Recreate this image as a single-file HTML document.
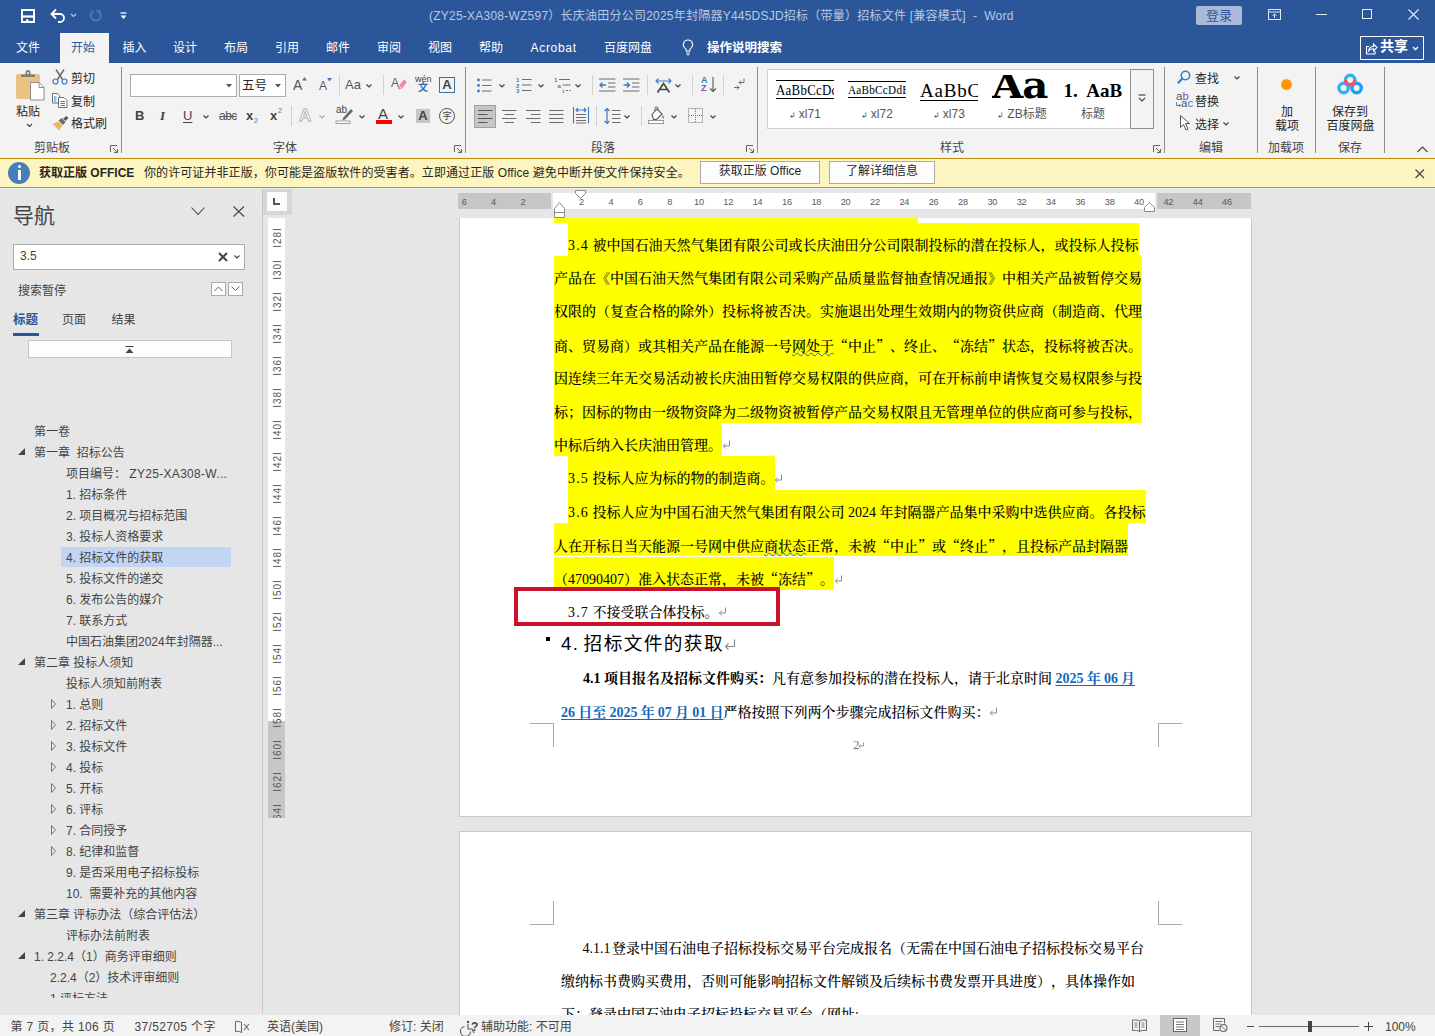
<!DOCTYPE html>
<html lang="zh-CN"><head><meta charset="utf-8"><title>Word</title>
<style>
html,body{margin:0;padding:0}
body{width:1435px;height:1036px;overflow:hidden;position:relative;background:#e6e6e6;font-family:"Liberation Sans","Noto Sans CJK SC",sans-serif;font-size:12px;color:#262626;line-height:1;text-spacing-trim:space-all;text-autospace:no-autospace}
.a{position:absolute;white-space:nowrap}
svg{position:absolute;overflow:visible}
/* title + tabs */
#title{left:0;top:0;width:1435px;height:63px;background:#2b579a}
#ttext{left:429px;top:10px;font-size:12px;color:#b9c8e0;white-space:pre;letter-spacing:0.23px}
.tab{top:41.6px;font-size:12px;color:#fff}
#tabact{left:60px;top:33px;width:49px;height:30px;background:#f3f3f3}
/* ribbon */
#ribbon{left:0;top:63px;width:1435px;height:95px;background:#f3f3f3}
.sep{width:1px;background:#8f8f8f;top:69px;height:84px}
.sep2{width:1px;background:#d0d0d0;height:20px}
.glab{top:141.5px;font-size:12px;color:#444}
.rt{font-size:12px;color:#262626;margin-top:1px}
/* notice */
#notice{left:0;top:158px;width:1435px;height:30px;background:#fdf5c0;border-top:1px solid #bc8d0f;border-bottom:1px solid #bc8d0f;box-sizing:border-box}
.nbtn{top:161px;height:23px;box-sizing:border-box;border:1px solid #ababab;background:#fdfdfd;font-size:12px;line-height:19.5px;text-align:center;color:#262626}
/* nav */
#nav{left:0;top:188px;width:262px;height:825px;background:#e6e6e6;border-right:1px solid #c6c6c6}
.nv{font-size:12px;color:#444;height:21px;line-height:21px;white-space:pre}
/* doc */
.page{background:#fff;border:1px solid #c8c8c8;box-sizing:border-box}
.d{font-family:"Liberation Serif","Noto Serif CJK SC",serif;font-weight:500;font-size:14px;color:#000;height:33.33px;line-height:33.33px}
.q{font-family:"Noto Serif CJK SC",serif;font-feature-settings:"fwid"}
.n{letter-spacing:1.17px}
.g{display:inline-block;width:3.5px}
.bl{font-weight:bold;color:#1268c0;text-decoration:underline;text-underline-offset:2px;word-spacing:-0.3px}
.pm{font-family:"DejaVu Sans",sans-serif;font-size:11px;color:#8a8a8a;margin-left:2px}
.pmi{position:static;display:inline-block;vertical-align:0.5px;margin-left:-0.5px}
.hl{background:#ffff00}
.wv{text-decoration:underline wavy #2a62d8 1px;text-underline-offset:1px}
.rn{font-size:9.2px;color:#595959;width:20px;text-align:center;top:196.5px;height:10px;line-height:10px;letter-spacing:-0.2px}
.vn{font-size:10px;letter-spacing:1px;color:#595959;width:32px;height:17px;line-height:17px;text-align:center;left:260.5px;transform:rotate(-90deg)}
/* status */
#status{left:0;top:1015px;width:1435px;height:21px;background:#f3f3f3}
.st{top:1021px;font-size:12px;color:#444}
.stw{letter-spacing:0.35px}
</style></head><body>
<div class="a" id="title"></div>
<!-- quick access -->
<svg style="left:21px;top:9px" width="14" height="14" viewBox="0 0 14 14"><rect x="1" y="1" width="12" height="12" fill="none" stroke="#fff" stroke-width="2"/><rect x="1" y="6.400" width="12" height="2.200" fill="#fff"/><rect x="5" y="10.500" width="2.500" height="3" fill="#fff"/></svg>
<svg style="left:50px;top:8px" width="16" height="16" viewBox="0 0 16 16"><path d="M2 6h8a4 4 0 0 1 0 8H8" fill="none" stroke="#fff" stroke-width="1.8"/><path d="M6 1.5L1.5 6 6 10.5" fill="none" stroke="#fff" stroke-width="1.8"/></svg>
<svg style="left:70px;top:13px" width="8" height="5"><path d="M1 1l2.5 2.5L6 1" fill="none" stroke="#b9c8e0" stroke-width="1.2"/></svg>
<svg style="left:89px;top:8px" width="14" height="14" viewBox="0 0 14 14"><path d="M4.500 3.200a5 5 0 1 0 6.200 1.300" fill="none" stroke="#4a79b6" stroke-width="1.900"/><path d="M7 2.200h4.300v4.300z" fill="#4a79b6" stroke="#4a79b6" stroke-width="0.600"/></svg>
<svg style="left:120px;top:12px" width="8" height="8"><path d="M0.5 1h6" stroke="#fff" stroke-width="1.3"/><path d="M0.5 3.5h6L3.5 7z" fill="#fff"/></svg>
<div class="a" id="ttext">(ZY25-XA308-WZ597）长庆油田分公司2025年封隔器Y445DSJD招标（带量）招标文件 [兼容模式]  -  Word</div>
<div class="a" style="left:1196px;top:6px;width:46px;height:19px;background:#a9bbd9;border-radius:2px;color:#2b579a;font-size:13px;line-height:19px;text-align:center">登录</div>
<svg style="left:1268px;top:9px" width="13" height="11"><rect x="0.5" y="0.5" width="12" height="10" fill="none" stroke="#dfe6f1"/><path d="M0.5 3h12M6.5 9V5M4.5 6.8l2-2 2 2" fill="none" stroke="#dfe6f1"/></svg>
<div class="a" style="left:1316px;top:14px;width:11px;height:1px;background:#e6ecf5"></div>
<div class="a" style="left:1362px;top:9px;width:10px;height:10px;box-sizing:border-box;border:1px solid #e6ecf5"></div>
<svg style="left:1408px;top:9px" width="11" height="11"><path d="M0.5 0.5l10 10M10.5 0.5l-10 10" stroke="#e6ecf5" stroke-width="1.1"/></svg>
<!-- tabs -->
<div class="a" id="tabact"></div>
<div class="a tab" style="left:16px">文件</div>
<div class="a tab" style="left:71px;color:#2b579a">开始</div>
<div class="a tab" style="left:122.5px">插入</div>
<div class="a tab" style="left:173px">设计</div>
<div class="a tab" style="left:224px">布局</div>
<div class="a tab" style="left:275px">引用</div>
<div class="a tab" style="left:326px">邮件</div>
<div class="a tab" style="left:377px">审阅</div>
<div class="a tab" style="left:428px">视图</div>
<div class="a tab" style="left:479px">帮助</div>
<div class="a tab" style="left:530.5px;letter-spacing:0.7px">Acrobat</div>
<div class="a tab" style="left:604px">百度网盘</div>
<svg style="left:682px;top:39px" width="12" height="17" viewBox="0 0 12 17"><path d="M6 1a4.6 4.6 0 0 0-2.6 8.4c.5.5.8 1 .8 1.8v.8h3.600v-.8c0-.8.3-1.300.8-1.800A4.600 4.600 0 0 0 6 1z M4.2 14h3.600 M4.700 15.800h2.600" fill="none" stroke="#fff" stroke-width="1.1"/></svg>
<div class="a tab" style="left:707px;font-weight:bold;font-size:12.500px">操作说明搜索</div>
<div class="a" style="left:1360px;top:36px;width:64px;height:24px;box-sizing:border-box;border:1px solid #fff"></div>
<svg style="left:1365px;top:42px" width="13" height="13" viewBox="0 0 13 13"><path d="M4 4.500H1.500v7.500h8.500V9" fill="none" stroke="#fff" stroke-width="1.1"/><path d="M3.500 9c.5-3 2.500-4.500 5-4.500V2l3.500 3.500L8.500 9V6.800C6.500 6.800 4.800 7.500 3.500 9z" fill="none" stroke="#fff" stroke-width="1.1"/></svg>
<div class="a" style="left:1380px;top:39px;font-size:14px;font-weight:bold;color:#fff">共享</div>
<svg style="left:1412px;top:46px" width="8" height="5"><path d="M1 1l2.500 2.500L6 1" fill="none" stroke="#fff" stroke-width="1.3"/></svg>
<div class="a" id="ribbon"></div>
<!-- clipboard group -->
<svg style="left:16px;top:70px" width="30" height="32" viewBox="0 0 30 32"><rect x="0" y="4" width="24" height="25" rx="2" fill="#eac282"/><path d="M5 7V4.500h4.500V2.500a2.500 2.500 0 0 1 5 0V4.500H19V7z" fill="#7f7f7f"/><circle cx="12" cy="3" r="1" fill="#f3f3f3"/><path d="M14.500 12.500h8.500l5 5v12.500H14.500z" fill="#fff" stroke="#8c8c8c"/><path d="M23 12.500v5h5" fill="none" stroke="#8c8c8c"/></svg>
<div class="a rt" style="left:16px;top:104.5px">粘贴</div>
<svg style="left:26px;top:123px" width="8" height="5"><path d="M1 1l2.500 2.500L6 1" fill="none" stroke="#444" stroke-width="1.2"/></svg>
<svg style="left:52px;top:69px" width="16" height="16" viewBox="0 0 16 16"><path d="M4 0.500l6.500 10M12 0.500L5.500 10.500" stroke="#6d6d6d" stroke-width="1.500" fill="none"/><circle cx="3.500" cy="12.500" r="2.500" fill="none" stroke="#3b7bc4" stroke-width="1.200"/><circle cx="12.500" cy="12.500" r="2.500" fill="none" stroke="#3b7bc4" stroke-width="1.200"/></svg>
<div class="a rt" style="left:71px;top:72px">剪切</div>
<svg style="left:52px;top:93px" width="16" height="15" viewBox="0 0 16 15"><path d="M0.500 0.500h5l2 2v7.500h-7z" fill="#fff" stroke="#6d6d6d"/><path d="M6.500 4.500h5.500l3 3v7h-8.500z" fill="#fff" stroke="#6d6d6d"/><path d="M2 4h2.500M2 6h2.500M2 8h2.500M8.500 8.500h4.500M8.500 10.500h4.500M8.500 12.500h4.500" stroke="#3b7bc4" fill="none"/></svg>
<div class="a rt" style="left:71px;top:94.5px">复制</div>
<svg style="left:52px;top:116px" width="17" height="15" viewBox="0 0 17 15"><path d="M0.500 8l6-2.500 4 4-3.500 5z" fill="#eab765"/><path d="M6.500 4.500l3-2.500 4 4-2.500 3z" fill="#6d6d6d"/><path d="M11 2.500l3.500-2.500 2 2-3 3z" fill="#595959"/></svg>
<div class="a rt" style="left:71px;top:117px">格式刷</div>
<div class="a glab" style="left:34px">剪贴板</div>
<svg class="ln" style="left:110px;top:145px" width="8" height="8"><path d="M0.500 7V0.500H7M3 3l4.500 4.500M7.500 4v3.500H4" fill="none" stroke="#666"/></svg>
<div class="a sep" style="left:121px;top:67px;height:86px"></div>
<!-- font group row1 -->
<div class="a" style="left:130px;top:74px;width:107px;height:23px;box-sizing:border-box;border:1px solid #ababab;background:#fff"></div>
<svg style="left:226px;top:84px" width="6" height="4"><path d="M0 0h6L3 3.500z" fill="#555"/></svg>
<div class="a" style="left:239px;top:74px;width:47px;height:23px;box-sizing:border-box;border:1px solid #ababab;background:#fff"></div>
<div class="a rt" style="left:242px;top:79px;font-size:12.500px">五号</div>
<svg style="left:275px;top:84px" width="6" height="4"><path d="M0 0h6L3 3.500z" fill="#555"/></svg>
<div class="a" style="left:293px;top:78px;font-size:14px;color:#555">A</div>
<svg style="left:302px;top:77px" width="5" height="4"><path d="M0 3.500h5L2.500 0z" fill="#3b7bc4"/></svg>
<div class="a" style="left:319px;top:80px;font-size:12px;color:#555">A</div>
<svg style="left:327px;top:78px" width="5" height="4"><path d="M0 0h5L2.500 3.500z" fill="#3b7bc4"/></svg>
<div class="a sep2" style="left:339px;top:75px"></div>
<div class="a" style="left:345px;top:78px;font-size:13px;color:#555">Aa</div>
<svg style="left:366px;top:84px" width="7" height="5"><path d="M0.500 0.500l2.500 2.500 2.500-2.500" fill="none" stroke="#444" stroke-width="1.200"/></svg>
<div class="a sep2" style="left:383px;top:75px"></div>
<div class="a" style="left:391px;top:77px;font-size:12px;color:#666">A</div>
<svg style="left:393px;top:79px" width="14" height="13"><path d="M6 6.500l5-6 3 2.500-5 6.500-3 1-1.500-1.500z" fill="#ee8a9c"/><path d="M6 6.500l3 3" stroke="#fff" stroke-width="0.800"/></svg>
<div class="a" style="left:415px;top:75px;font-size:9px;color:#444">wén</div>
<div class="a" style="left:418px;top:83px;font-size:10px;color:#2e6fbd;font-weight:bold">文</div>
<div class="a" style="left:439px;top:77px;width:16px;height:16px;box-sizing:border-box;border:1px solid #41719c;color:#444;font-size:13px;line-height:14px;text-align:center;font-weight:bold">A</div>
<!-- font group row2 -->
<div class="a" style="left:135px;top:109px;font-size:13px;font-weight:bold;color:#444">B</div>
<div class="a" style="left:160px;top:109px;font-size:13px;font-style:italic;font-family:'Liberation Serif',serif;font-weight:bold;color:#444">I</div>
<div class="a" style="left:183px;top:109px;font-size:13px;color:#444;text-decoration:underline;text-underline-offset:2px">U</div>
<svg style="left:203px;top:115px" width="7" height="5"><path d="M0.500 0.500l2.500 2.500 2.500-2.500" fill="none" stroke="#444" stroke-width="1.200"/></svg>
<div class="a" style="left:219px;top:110px;font-size:12px;color:#555;text-decoration:line-through;letter-spacing:-0.500px">abc</div>
<div class="a" style="left:246px;top:109px;font-size:13px;font-weight:bold;color:#444">x</div><div class="a" style="left:254px;top:117px;font-size:7px;color:#3b7bc4">2</div>
<div class="a" style="left:270px;top:109px;font-size:13px;font-weight:bold;color:#444">x</div><div class="a" style="left:278px;top:107px;font-size:7px;color:#3b7bc4">2</div>
<div class="a sep2" style="left:291px;top:106px"></div>
<div class="a" style="left:299px;top:107px;font-size:17px;color:#f7f7f7;-webkit-text-stroke:0.8px #b0b0b0;font-weight:bold">A</div>
<svg style="left:319px;top:115px" width="7" height="5"><path d="M0.500 0.500l2.500 2.500 2.500-2.500" fill="none" stroke="#aaa" stroke-width="1.200"/></svg>
<div class="a" style="left:336px;top:105px;font-size:10px;color:#444">ab</div>
<svg style="left:336px;top:107px" width="18" height="17"><path d="M7 11l8-9 2 2-8 8.500-2.500.500z" fill="#666"/><rect x="0" y="14" width="14" height="2.500" fill="#fff" stroke="#888" stroke-width="0.800"/></svg>
<svg style="left:359px;top:115px" width="7" height="5"><path d="M0.500 0.500l2.500 2.500 2.500-2.500" fill="none" stroke="#444" stroke-width="1.200"/></svg>
<div class="a" style="left:378px;top:106px;font-size:15px;color:#444">A</div>
<div class="a" style="left:376px;top:120px;width:16px;height:4px;background:#f00"></div>
<svg style="left:398px;top:115px" width="7" height="5"><path d="M0.500 0.500l2.500 2.500 2.500-2.500" fill="none" stroke="#444" stroke-width="1.200"/></svg>
<div class="a" style="left:416px;top:109px;width:14px;height:14px;background:#c6c6c6;color:#444;font-size:13px;line-height:14px;text-align:center;font-weight:bold">A</div>
<div class="a" style="left:439px;top:108px;width:16px;height:16px;box-sizing:border-box;border:1px solid #555;border-radius:8px;color:#444;font-size:9px;line-height:14px;text-align:center">字</div>
<div class="a glab" style="left:273px">字体</div>
<svg style="left:454px;top:145px" width="8" height="8"><path d="M0.500 7V0.500H7M3 3l4.500 4.500M7.500 4v3.500H4" fill="none" stroke="#666"/></svg>
<div class="a sep" style="left:465px;top:67px;height:86px"></div>
<!-- paragraph row1 -->
<svg style="left:477px;top:78px" width="15" height="15"><circle cx="1.500" cy="2" r="1.400" fill="#3b7bc4"/><circle cx="1.500" cy="7.500" r="1.400" fill="#3b7bc4"/><circle cx="1.500" cy="13" r="1.400" fill="#3b7bc4"/><path d="M5 2h9.500M5 7.500h9.500M5 13h9.500" stroke="#6d6d6d" stroke-width="1.100"/></svg>
<svg style="left:499px;top:84px" width="7" height="5"><path d="M0.500 0.500l2.500 2.500 2.500-2.500" fill="none" stroke="#444" stroke-width="1.200"/></svg>
<svg style="left:516px;top:77px" width="16" height="16"><path d="M6 2.500h9.500M6 8h9.500M6 13.500h9.500" stroke="#6d6d6d" stroke-width="1.100"/><text x="0" y="5" font-size="6" font-weight="bold" fill="#3b7bc4" font-family="Liberation Sans, sans-serif">1</text><text x="0" y="10.500" font-size="6" font-weight="bold" fill="#3b7bc4" font-family="Liberation Sans, sans-serif">2</text><text x="0" y="16" font-size="6" font-weight="bold" fill="#3b7bc4" font-family="Liberation Sans, sans-serif">3</text></svg>
<svg style="left:538px;top:84px" width="7" height="5"><path d="M0.500 0.500l2.500 2.500 2.500-2.500" fill="none" stroke="#444" stroke-width="1.200"/></svg>
<svg style="left:554px;top:77px" width="18" height="16"><path d="M5 2.500h11M8.500 8h8M12 13.500h2M15 13.500h1.500" stroke="#6d6d6d" stroke-width="1.100"/><text x="0" y="5" font-size="6" font-weight="bold" fill="#3b7bc4" font-family="Liberation Sans, sans-serif">1</text><text x="3.500" y="10.500" font-size="6" font-weight="bold" fill="#3b7bc4" font-family="Liberation Sans, sans-serif">a</text><text x="8.500" y="16" font-size="6" font-weight="bold" fill="#3b7bc4" font-family="Liberation Sans, sans-serif">i</text></svg>
<svg style="left:575px;top:84px" width="7" height="5"><path d="M0.500 0.500l2.500 2.500 2.500-2.500" fill="none" stroke="#444" stroke-width="1.200"/></svg>
<div class="a sep2" style="left:592px;top:75px"></div>
<svg style="left:599px;top:78px" width="17" height="14"><path d="M0 1h16.500M9 5h7.500M9 9h7.500M0 13h16.500" stroke="#6d6d6d" stroke-width="1.100"/><path d="M7 7H1M3.500 4.500L1 7l2.500 2.500" fill="none" stroke="#3b7bc4" stroke-width="1.300"/></svg>
<svg style="left:623px;top:78px" width="17" height="14"><path d="M0 1h16.500M9 5h7.500M9 9h7.500M0 13h16.500" stroke="#6d6d6d" stroke-width="1.100"/><path d="M0.500 7h6M4 4.500L6.500 7 4 9.500" fill="none" stroke="#3b7bc4" stroke-width="1.300"/></svg>
<div class="a sep2" style="left:647px;top:75px"></div>
<svg style="left:655px;top:78px" width="17" height="15"><path d="M1 3h15M3.500 0.500L1 3l2.500 2.500M13.500 0.500L16 3l-2.500 2.500" fill="none" stroke="#3b7bc4" stroke-width="1.100"/><path d="M2.500 14.500l6-9 6 9M5 11.500h7" fill="none" stroke="#444" stroke-width="1.600"/></svg>
<svg style="left:675px;top:84px" width="7" height="5"><path d="M0.500 0.500l2.500 2.500 2.500-2.500" fill="none" stroke="#444" stroke-width="1.200"/></svg>
<div class="a sep2" style="left:692px;top:75px"></div>
<div class="a" style="left:701px;top:76px;font-size:9px;font-weight:bold;color:#3b7bc4">A</div>
<div class="a" style="left:701px;top:84px;font-size:9px;font-weight:bold;color:#8e4fa8">Z</div>
<svg style="left:709px;top:77px" width="8" height="16"><path d="M4 0v14.500M1 11.500l3 3 3-3" fill="none" stroke="#555" stroke-width="1.100"/></svg>
<div class="a sep2" style="left:723px;top:75px"></div>
<svg style="left:733px;top:78px" width="12" height="14"><path d="M11 0.500v4H6M8 2.500l-2 2 2 2" fill="none" stroke="#6d6d6d"/><path d="M1 9.500h5M4 7.500l2 2-2 2" fill="none" stroke="#6d6d6d"/></svg>
<!-- paragraph row2 -->
<div class="a" style="left:474px;top:105px;width:22px;height:23px;box-sizing:border-box;border:1px solid #a0a0a0;background:#c6c6c6"></div>
<svg style="left:478px;top:110px" width="15" height="13"><path d="M0 0.500h14.500M0 4.500h9.500M0 8.500h14.500M0 12.500h9.500" stroke="#555" stroke-width="1.100"/></svg>
<svg style="left:502px;top:110px" width="15" height="13"><path d="M0 0.500h14.500M2.500 4.500h9.500M0 8.500h14.500M2.500 12.500h9.500" stroke="#6d6d6d" stroke-width="1.100"/></svg>
<svg style="left:526px;top:110px" width="15" height="13"><path d="M0 0.500h14.500M5 4.500h9.500M0 8.500h14.500M5 12.500h9.500" stroke="#6d6d6d" stroke-width="1.100"/></svg>
<svg style="left:549px;top:110px" width="15" height="13"><path d="M0 0.500h14.500M0 4.500h14.500M0 8.500h14.500M0 12.500h14.500" stroke="#6d6d6d" stroke-width="1.100"/></svg>
<svg style="left:573px;top:107px" width="16" height="17"><path d="M0.500 0v16.500M15.500 0v16.500" stroke="#3b7bc4" stroke-width="1.100"/><path d="M3 3h10M5 1l-2 2 2 2M11 1l2 2-2 2" fill="none" stroke="#3b7bc4" stroke-width="1.100"/><path d="M3 7.500h10M3 10.500h10M3 13.500h10M3 16h10" stroke="#6d6d6d" stroke-width="1.100"/></svg>
<div class="a sep2" style="left:596px;top:106px"></div>
<svg style="left:604px;top:108px" width="17" height="16"><path d="M3 0.500v15M0.500 3L3 0.500 5.500 3M0.500 13L3 15.500 5.500 13" fill="none" stroke="#3b7bc4" stroke-width="1.200"/><path d="M8 2.500h8.500M8 6.500h8.500M8 10.500h8.500M8 14.500h8.500" stroke="#6d6d6d" stroke-width="1.100"/></svg>
<svg style="left:624px;top:115px" width="7" height="5"><path d="M0.500 0.500l2.500 2.500 2.500-2.500" fill="none" stroke="#444" stroke-width="1.200"/></svg>
<div class="a sep2" style="left:641px;top:106px"></div>
<svg style="left:648px;top:107px" width="18" height="17"><path d="M4 7.500L9 2l5 5-5.500 5.500h-3z" fill="#fff" stroke="#555" stroke-width="1.100"/><path d="M7 4V1.500a1.500 1.500 0 0 1 3 0V3" fill="none" stroke="#555"/><path d="M14 7.500c1.500 1.500 2.500 3 1.500 4.500-1-.5-1.500-2.500-1.500-4.500z" fill="#3b7bc4"/><rect x="0.500" y="13.500" width="15" height="3" fill="#fff" stroke="#999"/></svg>
<svg style="left:671px;top:115px" width="7" height="5"><path d="M0.500 0.500l2.500 2.500 2.500-2.500" fill="none" stroke="#444" stroke-width="1.200"/></svg>
<svg style="left:688px;top:108px" width="15" height="15"><rect x="0.500" y="0.500" width="14" height="14" fill="none" stroke="#777" stroke-dasharray="1 1"/><path d="M7.500 1v13M1 7.500h13" stroke="#777" stroke-dasharray="1 1"/></svg>
<svg style="left:710px;top:115px" width="7" height="5"><path d="M0.500 0.500l2.500 2.500 2.500-2.500" fill="none" stroke="#444" stroke-width="1.200"/></svg>
<div class="a glab" style="left:591px">段落</div>
<svg style="left:746px;top:145px" width="8" height="8"><path d="M0.500 7V0.500H7M3 3l4.500 4.500M7.500 4v3.500H4" fill="none" stroke="#666"/></svg>
<div class="a sep" style="left:757px;top:67px;height:86px"></div>
<!-- styles -->
<div class="a" style="left:767px;top:69px;width:387px;height:60px;box-sizing:border-box;border:1px solid #d0d0d0;background:#fff"></div>
<div class="a" style="left:776px;top:80px;width:58px;height:19px;box-sizing:border-box;border-top:1px solid #000;border-bottom:1px solid #000;overflow:hidden"><div class="a" style="left:0;top:0;font-family:'Liberation Serif',serif;font-size:15px;line-height:18px;color:#000;letter-spacing:0.3px;transform:scaleX(0.86);transform-origin:0 0">AaBbCcDd</div></div>
<div class="a" style="left:848px;top:81px;width:58px;height:17px;box-sizing:border-box;border-top:1px solid #000;border-bottom:1px solid #000;overflow:hidden"><div class="a" style="left:0;top:0;font-family:'Liberation Serif',serif;font-size:13px;line-height:15px;color:#000;letter-spacing:0.3px;transform:scaleX(0.86);transform-origin:0 0">AaBbCcDdEe</div></div>
<div class="a" style="left:920px;top:80px;width:58px;height:21px;box-sizing:border-box;border-bottom:1px solid #000;overflow:hidden;font-family:'Liberation Serif',serif;font-size:19px;line-height:21px;color:#000;letter-spacing:0.800px">AaBbC</div>
<div class="a" style="left:992px;top:75px;width:58px;height:24px;overflow:hidden"><div class="a" style="left:0px;top:-10.5px;font-family:'DejaVu Serif','Liberation Serif',serif;font-weight:bold;font-size:38px;line-height:40px;color:#000;letter-spacing:-1px;transform:scaleX(1.06);transform-origin:0 0">Aa</div></div>
<div class="a" style="left:1063.5px;top:79px;width:58.5px;height:24px;overflow:hidden;font-family:'Liberation Serif',serif;font-weight:bold;font-size:19px;line-height:24px;color:#000;white-space:pre">1.  AaBl</div>
<div class="a rt" style="left:788.5px;top:106.5px;color:#555"><span style="font-size:8px">↲</span> xl71</div>
<div class="a rt" style="left:860.5px;top:106.5px;color:#555"><span style="font-size:8px">↲</span> xl72</div>
<div class="a rt" style="left:932.5px;top:106.5px;color:#555"><span style="font-size:8px">↲</span> xl73</div>
<div class="a rt" style="left:997px;top:106.5px;color:#555"><span style="font-size:8px">↲</span> ZB标题</div>
<div class="a rt" style="left:1081px;top:106.5px;color:#555">标题</div>
<div class="a" style="left:1130px;top:69px;width:24px;height:60px;box-sizing:border-box;border:1px solid #909090;background:#f3f3f3"></div>
<svg style="left:1138px;top:94px" width="8" height="8"><path d="M0.500 1h7" stroke="#444" stroke-width="1.200"/><path d="M1 4l3 3 3-3" fill="none" stroke="#444" stroke-width="1.200"/></svg>
<svg style="left:1153px;top:145px" width="8" height="8"><path d="M0.500 7V0.500H7M3 3l4.500 4.500M7.500 4v3.500H4" fill="none" stroke="#666"/></svg>
<div class="a glab" style="left:940px">样式</div>
<div class="a sep" style="left:1164px;top:67px;height:86px"></div>
<!-- editing -->
<svg style="left:1177px;top:70px" width="14" height="14"><circle cx="8.500" cy="5.500" r="4.200" fill="none" stroke="#3b7bc4" stroke-width="1.600"/><path d="M5.500 8.500L0.800 13.200" stroke="#3b7bc4" stroke-width="2"/></svg>
<div class="a rt" style="left:1195px;top:72px">查找</div>
<svg style="left:1234px;top:76px" width="7" height="5"><path d="M0.500 0.500l2.500 2.500 2.500-2.500" fill="none" stroke="#444" stroke-width="1.200"/></svg>
<div class="a" style="left:1176px;top:91px;font-size:11.500px;color:#555">a<span style="color:#8e4fa8">b</span></div>
<div class="a" style="left:1181px;top:98px;font-size:11.500px;color:#555">a<span style="color:#3b7bc4">c</span></div>
<svg style="left:1175.500px;top:102px" width="5" height="5"><path d="M0.500 0v3.500h4M3 2l1.500 1.500L3 5" fill="none" stroke="#3b7bc4" stroke-width="0.900"/></svg>
<div class="a rt" style="left:1195px;top:94.5px">替换</div>
<svg style="left:1180px;top:115px" width="10" height="16"><path d="M0.500 0.500v12l3-3 2.500 5.500 2-1-2.500-5.500h4z" fill="#fff" stroke="#555"/></svg>
<div class="a rt" style="left:1195px;top:117.5px">选择</div>
<svg style="left:1223px;top:122px" width="7" height="5"><path d="M0.500 0.500l2.500 2.500 2.500-2.500" fill="none" stroke="#444" stroke-width="1.200"/></svg>
<div class="a glab" style="left:1199px">编辑</div>
<div class="a sep" style="left:1257px;top:67px;height:86px"></div>
<!-- add-ins -->
<div class="a" style="left:1280.500px;top:78.500px;width:11px;height:11px;border-radius:6px;background:radial-gradient(circle,#ff9400 55%,#fdb04e 80%,rgba(253,200,120,0) 100%)"></div>
<div class="a rt" style="left:1281px;top:105px">加</div>
<div class="a rt" style="left:1275px;top:119px">载项</div>
<div class="a glab" style="left:1268px">加载项</div>
<div class="a sep" style="left:1315px;top:67px;height:86px"></div>
<!-- baidu -->
<svg style="left:1337px;top:73px" width="27" height="22" viewBox="0 0 27 22"><circle cx="6.600" cy="15" r="4.700" fill="none" stroke="#2fb3f5" stroke-width="3.400"/><circle cx="19.600" cy="15" r="4.700" fill="none" stroke="#1f9ff4" stroke-width="3.400"/><circle cx="13.200" cy="7" r="4.700" fill="#f3f3f3" stroke="#2db6f3" stroke-width="3.400"/><path d="M8.500 7a4.700 4.700 0 0 0 9.400 0" fill="none" stroke="#f4516c" stroke-width="3.400"/></svg>
<div class="a rt" style="left:1332px;top:105px">保存到</div>
<div class="a rt" style="left:1326.5px;top:119px">百度网盘</div>
<div class="a glab" style="left:1338px">保存</div>
<div class="a sep" style="left:1384px;top:67px;height:86px"></div>
<svg style="left:1417px;top:146px" width="12" height="7"><path d="M0.500 6l5-5 5 5" fill="none" stroke="#444" stroke-width="1.100"/></svg>
<div class="a" id="notice"></div>
<div class="a" style="left:8px;top:162px;width:22px;height:22px;border-radius:11px;background:#4a7eb8"></div>
<div class="a" style="left:18px;top:165px;width:3px;height:3px;border-radius:2px;background:#fff"></div><div class="a" style="left:18px;top:170px;width:3px;height:10px;background:#fff"></div>
<div class="a" style="left:39px;top:167px;font-size:12px;font-weight:bold;color:#262626">获取正版 OFFICE</div>
<div class="a" style="left:144px;top:167px;font-size:12px;color:#262626;letter-spacing:0.08px">你的许可证并非正版，你可能是盗版软件的受害者。立即通过正版 Office 避免中断并使文件保持安全。</div>
<div class="a nbtn" style="left:700px;width:120px">获取正版 Office</div>
<div class="a nbtn" style="left:829px;width:106px">了解详细信息</div>
<svg style="left:1415px;top:169px" width="10" height="10"><path d="M0.500 0.500l8.500 8.500M9 0.500L0.500 9" stroke="#444" stroke-width="1.200"/></svg>
<div class="a" id="nav"></div>
<div class="a" style="left:0;top:187px;width:262px;height:811px;overflow:hidden">
<div class="a nv" style="left:34px;top:234.5px">第一卷</div>
<svg style="left:18px;top:261px" width="8" height="8"><path d="M7 0v7H0z" fill="#444"/></svg>
<div class="a nv" style="left:34px;top:255.5px">第一章  招标公告</div>
<div class="a nv" style="left:66px;top:276.5px">项目编号： <span style="letter-spacing:0.3px">ZY25-XA308-W...</span></div>
<div class="a nv" style="left:66px;top:297.5px">1. 招标条件</div>
<div class="a nv" style="left:66px;top:318.5px">2. 项目概况与招标范围</div>
<div class="a nv" style="left:66px;top:339.5px">3. 投标人资格要求</div>
<div class="a" style="left:61px;top:360px;width:170px;height:20px;background:#c2d5f2"></div>
<div class="a nv" style="left:66px;top:360.5px">4. 招标文件的获取</div>
<div class="a nv" style="left:66px;top:381.5px">5. 投标文件的递交</div>
<div class="a nv" style="left:66px;top:402.5px">6. 发布公告的媒介</div>
<div class="a nv" style="left:66px;top:423.5px">7. 联系方式</div>
<div class="a nv" style="left:66px;top:444.5px">中国石油集团2024年封隔器...</div>
<svg style="left:18px;top:471px" width="8" height="8"><path d="M7 0v7H0z" fill="#444"/></svg>
<div class="a nv" style="left:34px;top:465.5px">第二章 投标人须知</div>
<div class="a nv" style="left:66px;top:486.5px">投标人须知前附表</div>
<svg style="left:50px;top:512px" width="8" height="10"><path d="M1.5 0.5l4 4.5-4 4.5z" fill="none" stroke="#777"/></svg>
<div class="a nv" style="left:66px;top:507.5px">1. 总则</div>
<svg style="left:50px;top:533px" width="8" height="10"><path d="M1.5 0.5l4 4.5-4 4.5z" fill="none" stroke="#777"/></svg>
<div class="a nv" style="left:66px;top:528.5px">2. 招标文件</div>
<svg style="left:50px;top:554px" width="8" height="10"><path d="M1.5 0.5l4 4.5-4 4.5z" fill="none" stroke="#777"/></svg>
<div class="a nv" style="left:66px;top:549.5px">3. 投标文件</div>
<svg style="left:50px;top:575px" width="8" height="10"><path d="M1.5 0.5l4 4.5-4 4.5z" fill="none" stroke="#777"/></svg>
<div class="a nv" style="left:66px;top:570.5px">4. 投标</div>
<svg style="left:50px;top:596px" width="8" height="10"><path d="M1.5 0.5l4 4.5-4 4.5z" fill="none" stroke="#777"/></svg>
<div class="a nv" style="left:66px;top:591.5px">5. 开标</div>
<svg style="left:50px;top:617px" width="8" height="10"><path d="M1.5 0.5l4 4.5-4 4.5z" fill="none" stroke="#777"/></svg>
<div class="a nv" style="left:66px;top:612.5px">6. 评标</div>
<svg style="left:50px;top:638px" width="8" height="10"><path d="M1.5 0.5l4 4.5-4 4.5z" fill="none" stroke="#777"/></svg>
<div class="a nv" style="left:66px;top:633.5px">7. 合同授予</div>
<svg style="left:50px;top:659px" width="8" height="10"><path d="M1.5 0.5l4 4.5-4 4.5z" fill="none" stroke="#777"/></svg>
<div class="a nv" style="left:66px;top:654.5px">8. 纪律和监督</div>
<div class="a nv" style="left:66px;top:675.5px">9. 是否采用电子招标投标</div>
<div class="a nv" style="left:66px;top:696.5px">10.  需要补充的其他内容</div>
<svg style="left:18px;top:723px" width="8" height="8"><path d="M7 0v7H0z" fill="#444"/></svg>
<div class="a nv" style="left:34px;top:717.5px">第三章 评标办法（综合评估法）</div>
<div class="a nv" style="left:66px;top:738.5px">评标办法前附表</div>
<svg style="left:18px;top:765px" width="8" height="8"><path d="M7 0v7H0z" fill="#444"/></svg>
<div class="a nv" style="left:34px;top:759.5px">1. 2.2.4（1）商务评审细则</div>
<div class="a nv" style="left:50px;top:780.5px">2.2.4（2）技术评审细则</div>
<div class="a nv" style="left:50px;top:801.5px">1.评标方法</div>
</div>
<div class="a" style="left:13px;top:204.5px;font-size:21px;color:#444">导航</div>
<svg style="left:191px;top:207px" width="14" height="9"><path d="M0.500 0.500l6.500 7 6.500-7" fill="none" stroke="#444" stroke-width="1.100"/></svg>
<svg style="left:233px;top:206px" width="12" height="11"><path d="M0.500 0.500l10.500 10M11 0.500L0.500 10.500" stroke="#444" stroke-width="1.100"/></svg>
<div class="a" style="left:13px;top:244px;width:232px;height:26px;box-sizing:border-box;border:1px solid #ababab;background:#fff"></div>
<div class="a" style="left:20px;top:250px;font-size:12px;color:#444">3.5</div>
<svg style="left:218px;top:252px" width="10" height="10"><path d="M1 1l8 8M9 1L1 9" stroke="#444" stroke-width="2"/></svg>
<svg style="left:234px;top:255px" width="7" height="5"><path d="M0.500 0.500l2.500 2.500 2.500-2.500" fill="none" stroke="#444" stroke-width="1.200"/></svg>
<div class="a" style="left:18px;top:284.5px;font-size:12px;color:#444">搜索暂停</div>
<div class="a" style="left:211px;top:282px;width:15px;height:14px;box-sizing:border-box;border:1px solid #ababab;background:#fdfdfd"></div>
<div class="a" style="left:228px;top:282px;width:15px;height:14px;box-sizing:border-box;border:1px solid #ababab;background:#fdfdfd"></div>
<svg style="left:214px;top:286px" width="9" height="6"><path d="M0.500 5l4-4 4 4" fill="none" stroke="#666"/></svg>
<svg style="left:231px;top:286px" width="9" height="6"><path d="M0.500 0.500l4 4 4-4" fill="none" stroke="#666"/></svg>
<div class="a" style="left:13px;top:313.5px;font-size:12.500px;font-weight:bold;color:#2b579a">标题</div>
<div class="a" style="left:13px;top:333px;width:26px;height:3px;background:#2b579a"></div>
<div class="a" style="left:62px;top:313.5px;font-size:12px;color:#444">页面</div>
<div class="a" style="left:111.5px;top:313.5px;font-size:12px;color:#444">结果</div>
<div class="a" style="left:28px;top:340px;width:204px;height:18px;box-sizing:border-box;border:1px solid #c6c6c6;background:#fdfdfd"></div>
<svg style="left:125px;top:345.5px" width="9" height="8"><path d="M0.500 0.500h8" stroke="#444" stroke-width="1.100"/><path d="M0.500 7l4-4.500 4 4.500z" fill="#444"/></svg>
<div class="a page" style="left:459px;top:188px;width:793px;height:629px"></div>
<div class="a page" style="left:459px;top:831px;width:793px;height:220px"></div>
<div class="a" style="left:263px;top:188px;width:1172px;height:30px;background:#e6e6e6"></div>
<div class="a" style="left:458px;top:193px;width:93px;height:16px;background:#c6c6c6"></div><div class="a" style="left:1157px;top:193px;width:94px;height:16px;background:#c6c6c6"></div>
<div class="a" style="left:553px;top:193px;width:602px;height:16px;background:#fff"></div>
<div class="a rn" style="left:454.2px">6</div>
<div class="a rn" style="left:483.5px">4</div>
<div class="a rn" style="left:512.9px">2</div>
<div class="a rn" style="left:571.5px">2</div>
<div class="a rn" style="left:600.9px">4</div>
<div class="a rn" style="left:630.2px">6</div>
<div class="a rn" style="left:659.6px">8</div>
<div class="a rn" style="left:688.9px">10</div>
<div class="a rn" style="left:718.2px">12</div>
<div class="a rn" style="left:747.6px">14</div>
<div class="a rn" style="left:776.9px">16</div>
<div class="a rn" style="left:806.3px">18</div>
<div class="a rn" style="left:835.6px">20</div>
<div class="a rn" style="left:864.9px">22</div>
<div class="a rn" style="left:894.3px">24</div>
<div class="a rn" style="left:923.6px">26</div>
<div class="a rn" style="left:953.0px">28</div>
<div class="a rn" style="left:982.3px">30</div>
<div class="a rn" style="left:1011.6px">32</div>
<div class="a rn" style="left:1041.0px">34</div>
<div class="a rn" style="left:1070.3px">36</div>
<div class="a rn" style="left:1099.7px">38</div>
<div class="a rn" style="left:1129.0px">40</div>
<div class="a rn" style="left:1158.3px">42</div>
<div class="a rn" style="left:1187.7px">44</div>
<div class="a rn" style="left:1217.0px">46</div>
<svg style="left:552px;top:188px" width="40" height="32"><path d="M23.5 2.5h10v3l-5 5-5-5z" fill="#fff" stroke="#8a8a8a"/><path d="M2.5 20.5l5-6 5 6v9h-10zM2.5 24.5h10" fill="#fff" stroke="#8a8a8a"/></svg>
<svg style="left:1142px;top:199px" width="16" height="14"><path d="M2.5 12.5v-4l5-5 5 5v4z" fill="#fff" stroke="#8a8a8a"/></svg>
<div class="a" style="left:263px;top:189px;width:29px;height:26px;background:#d6d6d6"></div>
<div class="a" style="left:267px;top:192px;width:20px;height:19px;background:#fbfbfb"></div>
<svg style="left:273px;top:198px" width="8" height="8"><path d="M1 0v6h6" fill="none" stroke="#555" stroke-width="2"/></svg>
<div class="a" style="left:268px;top:218px;width:17px;height:600px;background:#fff"></div>
<div class="a" style="left:268px;top:721px;width:17px;height:97px;background:#c6c6c6"></div>
<div class="a" style="left:260px;top:218px;width:34px;height:600px;overflow:hidden">
<div class="a vn" style="left:0.5px;top:10.5px">I28I</div>
<div class="a vn" style="left:0.5px;top:42.5px">I30I</div>
<div class="a vn" style="left:0.5px;top:74.5px">I32I</div>
<div class="a vn" style="left:0.5px;top:106.5px">I34I</div>
<div class="a vn" style="left:0.5px;top:138.5px">I36I</div>
<div class="a vn" style="left:0.5px;top:170.5px">I38I</div>
<div class="a vn" style="left:0.5px;top:202.5px">I40I</div>
<div class="a vn" style="left:0.5px;top:234.5px">I42I</div>
<div class="a vn" style="left:0.5px;top:266.5px">I44I</div>
<div class="a vn" style="left:0.5px;top:298.5px">I46I</div>
<div class="a vn" style="left:0.5px;top:330.5px">I48I</div>
<div class="a vn" style="left:0.5px;top:362.5px">I50I</div>
<div class="a vn" style="left:0.5px;top:394.5px">I52I</div>
<div class="a vn" style="left:0.5px;top:426.5px">I54I</div>
<div class="a vn" style="left:0.5px;top:458.5px">I56I</div>
<div class="a vn" style="left:0.5px;top:490.5px">I58I</div>
<div class="a vn" style="left:0.5px;top:522.5px">I60I</div>
<div class="a vn" style="left:0.5px;top:554.5px">I62I</div>
<div class="a vn" style="left:0.5px;top:586.5px">I64I</div>
</div>
<div class="a hl" style="left:554px;top:218.00px;width:364px;height:5.00px"></div>
<div class="a hl" style="left:568px;top:222.90px;width:571px;height:33.36px"></div>
<div class="a hl" style="left:554px;top:256.26px;width:588px;height:166.80px"></div>
<div class="a hl" style="left:554px;top:423.06px;width:168px;height:33.36px"></div>
<div class="a hl" style="left:568px;top:456.42px;width:207px;height:33.36px"></div>
<div class="a hl" style="left:568px;top:489.78px;width:577.5px;height:33.36px"></div>
<div class="a hl" style="left:554px;top:523.14px;width:574px;height:33.36px"></div>
<div class="a hl" style="left:554px;top:556.50px;width:280px;height:33.36px"></div>
<div class="a d" style="left:568px;top:228.70px;"><span class="n">3.4</span><span class="g"></span>被中国石油天然气集团有限公司或长庆油田分公司限制投标的潜在投标人，或投标人投标</div>
<div class="a d" style="left:554px;top:262.06px;">产品在《中国石油天然气集团有限公司采购产品质量监督抽查情况通报》中相关产品被暂停交易</div>
<div class="a d" style="left:554px;top:295.42px;">权限的（复查合格的除外）投标将被否决。实施退出处理生效期内的物资供应商（制造商、代理</div>
<div class="a d" style="left:554px;top:328.78px;">商、贸易商）或其相关产品在能源一号<span class="wv">网处于</span><span class="q">“</span>中止<span class="q">”</span>、终止、<span class="q">“</span>冻结<span class="q">”</span>状态，投标将被否决。</div>
<div class="a d" style="left:554px;top:362.14px;">因连续三年无交易活动被长庆油田暂停交易权限的供应商，可在开标前申请恢复交易权限参与投</div>
<div class="a d" style="left:554px;top:395.50px;">标；因标的物由一级物资降为二级物资被暂停产品交易权限且无管理单位的供应商可参与投标，</div>
<div class="a d" style="left:554px;top:428.86px;">中标后纳入长庆油田管理。<svg class="pmi" width="9" height="9" viewBox="0 0 9 9"><path d="M7.500 0.500v5.500H1.500M3.800 3.500L1.300 6l2.500 2.500" fill="none" stroke="#8c8c8c"/></svg></div>
<div class="a d" style="left:568px;top:462.22px;"><span class="n">3.5</span><span class="g"></span>投标人应为标的物的制造商。<svg class="pmi" width="9" height="9" viewBox="0 0 9 9"><path d="M7.500 0.500v5.500H1.500M3.800 3.500L1.300 6l2.500 2.500" fill="none" stroke="#8c8c8c"/></svg></div>
<div class="a d" style="left:568px;top:495.58px;"><span class="n">3.6</span><span class="g"></span>投标人应为中国石油天然气集团有限公司<span class="g"></span><span class="n0">2024</span><span class="g"></span>年封隔器产品集中采购中选供应商。各投标</div>
<div class="a d" style="left:554px;top:528.94px;">人在开标日当天能源一号网中供应<span class="wv">商状态</span>正常，未被<span class="q">“</span>中止<span class="q">”</span>或<span class="q">“</span>终止<span class="q">”</span>，且投标产品封隔器</div>
<div class="a d" style="left:554px;top:562.30px;">（<span class="n0">47090407</span>）准入状态正常，未被<span class="q">“</span>冻结<span class="q">”</span>。<svg class="pmi" width="9" height="9" viewBox="0 0 9 9"><path d="M7.500 0.500v5.500H1.500M3.800 3.500L1.300 6l2.500 2.500" fill="none" stroke="#8c8c8c"/></svg></div>
<div class="a d" style="left:568px;top:595.66px;"><span class="n">3.7</span><span class="g"></span>不接受联合体投标。<svg class="pmi" width="9" height="9" viewBox="0 0 9 9"><path d="M7.500 0.500v5.500H1.500M3.800 3.500L1.300 6l2.500 2.500" fill="none" stroke="#8c8c8c"/></svg></div>
<div class="a" style="left:514px;top:587px;width:266px;height:39px;box-sizing:border-box;border:4px solid #c9112b"></div>
<div class="a" style="left:546px;top:637px;width:4px;height:4px;background:#000"></div>
<div class="a" id="h4" style="left:561px;top:633px;font-family:'Liberation Sans','Noto Sans CJK SC',sans-serif;font-size:18.67px;letter-spacing:1.4px;color:#000;height:22px;line-height:22px"><span style="display:inline-block;width:22.6px">4.</span>招标文件的获取<svg class="pmi" style="margin-left:0;vertical-align:0" width="12" height="11" viewBox="0 0 12 11"><path d="M10.500 0.500v7H1.500M4.500 4.500L1.500 7.500l3 3" fill="none" stroke="#8c8c8c" stroke-width="1.200"/></svg></div>
<div class="a d" style="left:583px;top:662.38px"><span style="font-weight:bold">4.1<span class="g"></span>项目报名及招标文件购买：</span>凡有意参加投标的潜在投标人，请于北京时间<span class="g"></span><span class="bl">2025 年 06 月</span></div>
<div class="a d" style="left:561px;top:695.74px"><span class="bl">26 日至 2025 年 07 月 01 日</span>严格按照下列两个步骤完成招标文件购买：<svg class="pmi" width="9" height="9" viewBox="0 0 9 9"><path d="M7.500 0.500v5.500H1.500M3.800 3.500L1.300 6l2.500 2.500" fill="none" stroke="#8c8c8c"/></svg></div>
<div class="a" style="left:530px;top:723px;width:24px;height:1px;background:#a6a6a6"></div>
<div class="a" style="left:553px;top:723px;width:1px;height:24px;background:#a6a6a6"></div>
<div class="a" style="left:1158px;top:723px;width:24px;height:1px;background:#a6a6a6"></div>
<div class="a" style="left:1158px;top:723px;width:1px;height:24px;background:#a6a6a6"></div>
<div class="a" style="left:530px;top:924px;width:24px;height:1px;background:#a6a6a6"></div>
<div class="a" style="left:553px;top:901px;width:1px;height:24px;background:#a6a6a6"></div>
<div class="a" style="left:1158px;top:924px;width:24px;height:1px;background:#a6a6a6"></div>
<div class="a" style="left:1158px;top:901px;width:1px;height:24px;background:#a6a6a6"></div>
<div class="a" style="left:853px;top:738px;font-family:'Liberation Serif',serif;font-size:13px;color:#7d7d7d">2<svg class="pmi" style="margin-left:-2px;vertical-align:1px" width="6" height="6" viewBox="0 0 6 6"><path d="M5.500 0.500v3.500H1M2.500 2.500L1 4l1.500 1.500" fill="none" stroke="#8c8c8c" stroke-width="0.900"/></svg></div>
<div class="a d" style="left:582.5px;top:931.50px">4.1.1<span style="display:inline-block;width:1.5px"></span>登录中国石油电子招标投标交易平台完成报名（无需在中国石油电子招标投标交易平台</div>
<div class="a d" style="left:561px;top:964.86px">缴纳标书费购买费用，否则可能影响招标文件解锁及后续标书费发票开具进度），具体操作如</div>
<div class="a d" style="left:561px;top:998.22px">下：登录中国石油电子招标投标交易平台（网址:</div>
<div class="a" id="status"></div>
<div class="a st stw" style="left:10.5px">第 7 页，共 106 页</div>
<div class="a st stw" style="left:134.5px">37/52705 个字</div>
<svg style="left:235px;top:1019.5px" width="15" height="14"><path d="M6.500 2.500C5 1.500 3 1.200 0.500 1.500v10c2.500-.300 4.500 0 6 1z" fill="none" stroke="#666"/><path d="M6.500 2.500v10.500" stroke="#666"/><path d="M9 4l5 6M14 4l-5 6" stroke="#666" stroke-width="1.100"/></svg>
<div class="a st" style="left:267px">英语(美国)</div>
<div class="a st" style="left:389px">修订: 关闭</div>
<svg style="left:463px;top:1019.5px" width="16" height="15"><circle cx="5" cy="2" r="1.300" fill="#555"/><path d="M1.500 6.500a5 5 0 1 0 6 5" fill="none" stroke="#555" stroke-width="1.100"/><path d="M5 4v5h4l2 4" fill="none" stroke="#555" stroke-width="1.100"/></svg>
<div class="a" style="left:471px;top:1021px;font-size:12px;font-weight:bold;color:#444">?</div>
<div class="a st" style="left:481px">辅助功能: 不可用</div>
<svg style="left:1132px;top:1019px" width="15" height="13"><path d="M7.500 2C6 1 4 .700 0.500 1v10.500c3.500-.300 5.500 0 7 1 1.500-1 3.500-1.300 7-1V1c-3.500-.300-5.500 0-7 1zM7.500 2v10.500" fill="none" stroke="#666"/><path d="M2.500 4h3M2.500 6h3M2.500 8h3M9.500 4h3M9.500 6h3M9.500 8h3" stroke="#666" stroke-width="0.800"/></svg>
<div class="a" style="left:1160px;top:1015px;width:40px;height:21px;background:#c8c8c8"></div>
<svg style="left:1173px;top:1018px" width="14" height="14"><rect x="0.500" y="0.500" width="13" height="13" fill="#fff" stroke="#666"/><path d="M3 4h8M3 6.500h8M3 9h8M3 11.500h8" stroke="#666" stroke-width="0.900"/></svg>
<svg style="left:1213px;top:1018px" width="15" height="14"><path d="M0.500 0.500h11v5M0.500 0.500v12h6" fill="none" stroke="#666"/><path d="M2.500 3.500h7M2.500 6h5M2.500 8.500h4" stroke="#666" stroke-width="0.900"/><circle cx="10.500" cy="10" r="3.500" fill="none" stroke="#666" stroke-width="1.100"/><path d="M8 7.500l5 5" stroke="#666"/></svg>
<div class="a" style="left:1247px;top:1026px;width:7px;height:1px;background:#444"></div>
<div class="a" style="left:1259px;top:1026px;width:100px;height:1px;background:#6d6d6d"></div>
<div class="a" style="left:1307.5px;top:1021px;width:4.5px;height:11px;background:#444"></div>
<div class="a" style="left:1364px;top:1026px;width:9px;height:1px;background:#444"></div><div class="a" style="left:1368px;top:1022px;width:1px;height:9px;background:#444"></div>
<div class="a st" style="left:1385px">100%</div>
<div class="a" id="nline" style="left:0;top:188px;width:1435px;height:1px;background:#efefef"></div>
</body></html>
